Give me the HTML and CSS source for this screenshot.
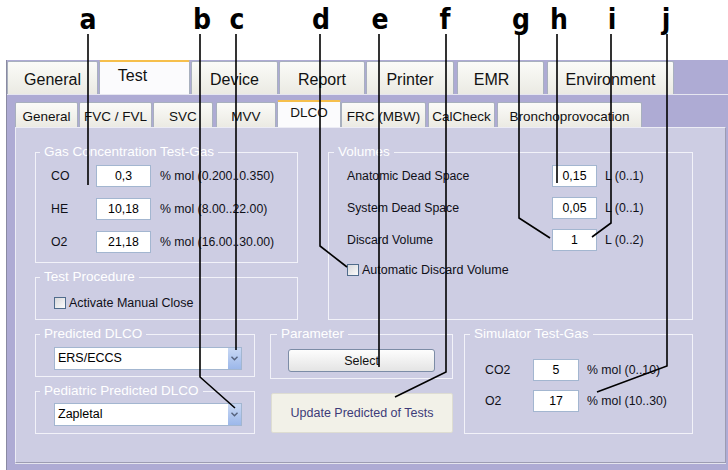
FILE: index.html
```html
<!DOCTYPE html>
<html lang="en">
<head>
    <meta charset="UTF-8">
    <title>DLCO Settings</title>
    <link rel="stylesheet" href="styles.css">
</head>
<body>
<div class="screen">
    <div class="window">
        <div class="main-tabs">
            <div class="tab">General</div>
            <div class="tab active">Test</div>
            <div class="tab">Device</div>
            <div class="tab">Report</div>
            <div class="tab">Printer</div>
            <div class="tab">EMR</div>
            <div class="tab">Environment</div>
        </div>

        <div class="main-panel">
            <div class="sub-tabs">
                <div class="sub-tab">General</div>
                <div class="sub-tab">FVC / FVL</div>
                <div class="sub-tab">SVC</div>
                <div class="sub-tab">MVV</div>
                <div class="sub-tab active">DLCO</div>
                <div class="sub-tab">FRC (MBW)</div>
                <div class="sub-tab">CalCheck</div>
                <div class="sub-tab">Bronchoprovocation</div>
            </div>

            <div class="sub-panel">
                <div class="top-row">
                    <div class="left-col">
                        <div class="group gas">
                            <div class="group-title">Gas Concentration Test-Gas</div>
                            <div class="fields">
                                <span class="lbl">CO</span><span class="input">0,3</span><span class="range">% mol (0.200..0.350)</span>
                                <span class="lbl">HE</span><span class="input">10,18</span><span class="range">% mol (8.00..22.00)</span>
                                <span class="lbl">O2</span><span class="input">21,18</span><span class="range">% mol (16.00..30.00)</span>
                            </div>
                        </div>
                        <div class="group procedure">
                            <div class="group-title">Test Procedure</div>
                            <label class="check"><span class="box"></span>Activate Manual Close</label>
                        </div>
                    </div>

                    <div class="group volumes">
                        <div class="group-title">Volumes</div>
                        <div class="fields">
                            <span class="lbl">Anatomic Dead Space</span><span class="input">0,15</span><span class="range">L (0..1)</span>
                            <span class="lbl">System Dead Space</span><span class="input">0,05</span><span class="range">L (0..1)</span>
                            <span class="lbl">Discard Volume</span><span class="input">1</span><span class="range">L (0..2)</span>
                        </div>
                        <label class="check"><span class="box"></span>Automatic Discard Volume</label>
                    </div>
                </div>

                <div class="bottom-row">
                    <div class="col-predicted">
                        <div class="group predicted">
                            <div class="group-title">Predicted DLCO</div>
                            <div class="combo">
                                <span>ERS/ECCS</span>
                                <span class="combo-arrow"><svg width="7" height="5" viewBox="0 0 7 5"><polyline points="0.5,0.8 3.5,3.8 6.5,0.8" fill="none" stroke="#55627c" stroke-width="1.4"/></svg></span>
                            </div>
                        </div>
                        <div class="group predicted">
                            <div class="group-title">Pediatric Predicted DLCO</div>
                            <div class="combo">
                                <span>Zapletal</span>
                                <span class="combo-arrow"><svg width="7" height="5" viewBox="0 0 7 5"><polyline points="0.5,0.8 3.5,3.8 6.5,0.8" fill="none" stroke="#55627c" stroke-width="1.4"/></svg></span>
                            </div>
                        </div>
                    </div>

                    <div class="col-parameter">
                        <div class="group parameter">
                            <div class="group-title">Parameter</div>
                            <button class="select-btn">Select</button>
                        </div>
                        <button class="update-btn">Update Predicted of Tests</button>
                    </div>

                    <div class="group simulator">
                        <div class="group-title">Simulator Test-Gas</div>
                        <div class="fields">
                            <span class="lbl">CO2</span><span class="input">5</span><span class="range">% mol (0..10)</span>
                            <span class="lbl">O2</span><span class="input">17</span><span class="range">% mol (10..30)</span>
                        </div>
                    </div>
                </div>
            </div>
        </div>
    </div>

    <!-- callout letters and leader lines -->
    <svg class="callouts" width="728" height="470" viewBox="0 0 728 470">
        <g class="letters">
            <text x="88" y="29">a</text>
            <text x="202" y="29">b</text>
            <text x="237" y="29">c</text>
            <text x="321" y="29">d</text>
            <text x="380" y="29">e</text>
            <text x="445" y="29">f</text>
            <text x="521" y="29">g</text>
            <text x="559" y="29">h</text>
            <text x="612" y="29">i</text>
            <text x="666" y="29">j</text>
        </g>
        <g class="leaders">
            <polyline points="88,34 88,185"/>
            <polyline points="200,34 200,377 235,408"/>
            <polyline points="236,34 236,350"/>
            <polyline points="320,34 320,246 347,267"/>
            <polyline points="379,34 379,367"/>
            <polyline points="446,34 446,372 395,397"/>
            <polyline points="519,34 519,218 550,238"/>
            <polyline points="557,34 557,183"/>
            <polyline points="611,34 611,223 592,237"/>
            <polyline points="667,34 667,366 597,392"/>
        </g>
    </svg>
</div>
</body>
</html>
```

FILE: styles.css
```css
body {
    margin: 0;
    background: #ffffff;
    font-family: "Liberation Sans", Arial, sans-serif;
    font-size: 12px;
    color: #101018;
}

.screen {
    position: relative;
    width: 728px;
    height: 470px;
    overflow: hidden;
}

.window {
    margin: 60px 0 0 6px;
    width: 722px;
    height: 410px;
    box-sizing: border-box;
    background: #aeabd4;
    border-left: 1px solid #8a8aa2;
}

/* main tab strip */
.main-tabs {
    display: flex;
    align-items: flex-end;
    height: 34px;
}

.tab {
    box-sizing: border-box;
    height: 33px;
    display: flex;
    align-items: center;
    justify-content: center;
    padding-top: 3px;
    margin-right: 1px;
    background: linear-gradient(#fbfbf8, #ebeae3);
    border: 1px solid #a8b0be;
    border-bottom: none;
    border-radius: 2px 2px 0 0;
    font-size: 16px;
    color: #111;
}

.tab:nth-child(1) { width: 91px; }
.tab:nth-child(2) { width: 91px; }
.tab:nth-child(3) { width: 87px; }
.tab:nth-child(4) { width: 86px; }
.tab:nth-child(5) { width: 88px; margin-right: 3px; }
.tab:nth-child(6) { width: 87px; margin-right: 3px; padding-right: 18px; }
.tab:nth-child(7) { width: 127px; }

.tab.active {
    height: 34px;
    background: #fbfbfd;
    border-top: 2px solid #f6bf4c;
    padding: 0 24px 4px 0;
}

.main-panel {
    height: 376px;
    box-sizing: border-box;
    border-top: 1px solid #e6e6f0;
    padding: 7px 0 0 8px;
}

/* second tab strip */
.sub-tabs {
    display: flex;
    align-items: flex-end;
    height: 25px;
}

.sub-tab {
    box-sizing: border-box;
    height: 25px;
    display: flex;
    align-items: center;
    justify-content: center;
    padding-top: 2px;
    margin-right: 1px;
    background: linear-gradient(#fbfbf8, #ebeae3);
    border: 1px solid #a8b0be;
    border-bottom: none;
    border-radius: 2px 2px 0 0;
    font-size: 13.5px;
    color: #111;
}

.sub-tab:nth-child(1) { width: 63px; }
.sub-tab:nth-child(2) { width: 73px; }
.sub-tab:nth-child(3) { width: 60px; margin-right: 3px; }
.sub-tab:nth-child(4) { width: 60px; }
.sub-tab:nth-child(5) { width: 64px; margin-right: 0; }
.sub-tab:nth-child(6) { width: 85px; margin-right: 2px; }
.sub-tab:nth-child(7) { width: 67px; margin-right: 2px; }
.sub-tab:nth-child(8) { width: 145px; }

.sub-tab.active {
    height: 27px;
    background: #fbfbfd;
    border-top: 2px solid #f6bf4c;
    padding: 0 0 4px 0;
}

.sub-panel {
    width: 711px;
    height: 336px;
    box-sizing: border-box;
    background: #cdcde3;
    border: 1px solid #ececf5;
    border-right-color: #9c9cb2;
    border-bottom-color: #9c9cb2;
    box-shadow: 0 1px 0 #e4e4ee;
    padding: 24px 0 0 19px;
}

.top-row {
    display: flex;
    gap: 30px;
}

.left-col {
    display: flex;
    flex-direction: column;
    gap: 14px;
}

.bottom-row {
    display: flex;
    margin-top: 14px;
}

/* group boxes: --pad is the left inset of the content */
.group {
    --pad: 16px;
    box-sizing: border-box;
    display: flex;
    flex-direction: column;
    align-items: flex-start;
    border: 1px solid #f2f2f9;
    padding-left: var(--pad);
}

.group-title {
    height: 16px;
    line-height: 16px;
    margin: -9px 0 0 calc(4px - var(--pad));
    padding: 0 4px;
    background: #cdcde3;
    font-size: 13.5px;
    color: #ffffff;
}

.gas { width: 263px; height: 111px; --pad: 15px; }
.procedure { width: 263px; height: 43px; --pad: 18px; }
.volumes { width: 365px; height: 168px; --pad: 18px; }

.volumes .group-title { margin-left: calc(5px - var(--pad)); }

.fields {
    display: grid;
    align-items: center;
    row-gap: 11px;
    margin-top: 5px;
}

.gas .fields { grid-template-columns: 45px 55px auto; }
.volumes .fields { grid-template-columns: 205px 45px auto; row-gap: 10px; margin-top: 5px; }

.lbl, .range {
    font-size: 12.3px;
}

.input {
    box-sizing: border-box;
    height: 22px;
    line-height: 20px;
    background: #ffffff;
    border: 1px solid #a3b6d0;
    text-align: center;
    font-size: 12.3px;
    color: #000;
}

.range {
    margin-left: 9px;
}

.volumes .range,
.simulator .range {
    margin-left: 8px;
}

.check {
    display: flex;
    align-items: center;
    gap: 3px;
    font-size: 12.5px;
}

.procedure .check { margin-top: 11px; }
.volumes .check { margin-top: 12px; }

.box {
    box-sizing: border-box;
    width: 12px;
    height: 12px;
    border: 1px solid #506c8c;
    background: linear-gradient(135deg, #d8d8dc, #fbfbfb);
}

/* bottom row */
.col-predicted {
    width: 220px;
    display: flex;
    flex-direction: column;
    gap: 14px;
    margin-right: 15px;
}

.predicted {
    width: 220px;
    height: 43px;
    --pad: 18px;
}

.combo {
    box-sizing: border-box;
    width: 188px;
    height: 23px;
    margin-top: 5px;
    display: flex;
    align-items: stretch;
    justify-content: space-between;
    background: #ffffff;
    border: 1px solid #a3b6d0;
    padding-left: 3px;
    line-height: 21px;
    font-size: 12.5px;
    color: #000;
}

.predicted:nth-child(2) .combo { margin-top: 4px; }

.combo-arrow {
    width: 13px;
    display: flex;
    align-items: center;
    justify-content: center;
    background: linear-gradient(#c9d8f4, #9cb8ea);
}

.col-parameter {
    width: 183px;
    display: flex;
    flex-direction: column;
    gap: 14px;
    margin-right: 11px;
}

.parameter {
    height: 45px;
    --pad: 17px;
}

.parameter .group-title { margin-left: calc(6px - var(--pad)); }

.select-btn {
    width: 147px;
    height: 23px;
    margin-top: 7px;
    padding: 0;
    background: linear-gradient(#fdfdfd, #e4e4e4);
    border: 1px solid #7c8ca6;
    border-radius: 3px;
    font-family: "Liberation Sans", Arial, sans-serif;
    font-size: 12.5px;
    color: #111;
}

.update-btn {
    width: 182px;
    height: 40px;
    margin-left: 1px;
    padding: 0;
    background: #f2f1e8;
    border: 1px solid #deddd2;
    border-radius: 2px;
    font-family: "Liberation Sans", Arial, sans-serif;
    font-size: 12.5px;
    color: #3d3b78;
}

.simulator {
    width: 229px;
    height: 100px;
    --pad: 20px;
}

.simulator .group-title { margin-left: calc(5px - var(--pad)); }

.simulator .fields {
    grid-template-columns: 48px 46px auto;
    row-gap: 9px;
    margin-top: 17px;
}

/* callouts over the screenshot */
.callouts {
    position: absolute;
    top: 0;
    left: 0;
    pointer-events: none;
}

.letters text {
    font-family: "DejaVu Sans Condensed", "DejaVu Sans", sans-serif;
    font-stretch: condensed;
    font-weight: bold;
    font-size: 28px;
    text-anchor: middle;
    fill: #000;
}

.leaders polyline {
    fill: none;
    stroke: #000;
    stroke-width: 1.6;
}
```
